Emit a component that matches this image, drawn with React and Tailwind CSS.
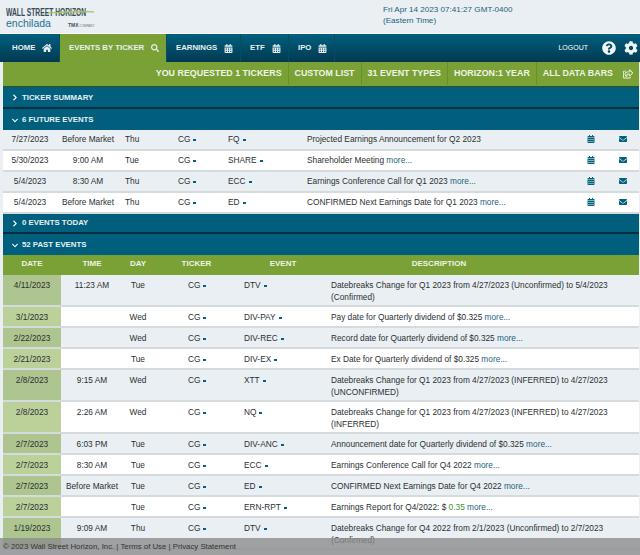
import { FaHome, FaSearch, FaCalendarAlt, FaQuestionCircle, FaCog, FaEnvelope, FaChevronRight, FaChevronDown, FaRegShareSquare } from "react-icons/fa";

const futureEvents = [
  ["7/27/2023", "Before Market", "Thu", "FQ", "Projected Earnings Announcement for Q2 2023", ""],
  ["5/30/2023", "9:00 AM", "Tue", "SHARE", "Shareholder Meeting ", "more..."],
  ["5/4/2023", "8:30 AM", "Thu", "ECC", "Earnings Conference Call for Q1 2023 ", "more..."],
  ["5/4/2023", "Before Market", "Thu", "ED", "CONFIRMED Next Earnings Date for Q1 2023 ", "more..."],
];

const pastEvents = [
  ["4/11/2023", "11:23 AM", "Tue", "DTV", "Datebreaks Change for Q1 2023 from 4/27/2023 (Unconfirmed) to 5/4/2023 (Confirmed)", "", "h-[32px]"],
  ["3/1/2023", "", "Wed", "DIV-PAY", "Pay date for Quarterly dividend of $0.325 ", "more...", "h-[21px]"],
  ["2/22/2023", "", "Wed", "DIV-REC", "Record date for Quarterly dividend of $0.325 ", "more...", "h-[21px]"],
  ["2/21/2023", "", "Tue", "DIV-EX", "Ex Date for Quarterly dividend of $0.325 ", "more...", "h-[21px]"],
  ["2/8/2023", "9:15 AM", "Wed", "XTT", "Datebreaks Change for Q1 2023 from 4/27/2023 (INFERRED) to 4/27/2023 (UNCONFIRMED)", "", "h-[32px]"],
  ["2/8/2023", "2:26 AM", "Wed", "NQ", "Datebreaks Change for Q1 2023 from 4/27/2023 (INFERRED) to 4/27/2023 (INFERRED)", "", "h-[32px]"],
  ["2/7/2023", "6:03 PM", "Tue", "DIV-ANC", "Announcement date for Quarterly dividend of $0.325 ", "more...", "h-[21px]"],
  ["2/7/2023", "8:30 AM", "Tue", "ECC", "Earnings Conference Call for Q4 2022 ", "more...", "h-[21px]"],
  ["2/7/2023", "Before Market", "Tue", "ED", "CONFIRMED Next Earnings Date for Q4 2022 ", "more...", "h-[21px]"],
  ["2/7/2023", "", "Tue", "ERN-RPT", "Earnings Report for Q4/2022: $ ", "more...", "h-[21px]"],
  ["1/19/2023", "9:09 AM", "Thu", "DTV", "Datebreaks Change for Q4 2022 from 2/1/2023 (Unconfirmed) to 2/7/2023 (Confirmed)", "", "h-[32px]"],
];

function Caret() {
  return <span className="ml-[3px] inline-block h-[2px] w-[3px] align-middle bg-[#00607e]" />;
}

function NavTab({ label, icon, width, active }) {
  return (
    <div className={`flex items-center gap-[7px] border-r border-[#0a4a63] pl-[9px] ${width} ${active ? "bg-[#7aa135]" : ""}`}>
      <span className="text-[7.8px] font-bold text-[#e9eff2]">{label}</span>
      {icon}
    </div>
  );
}

function SectionBar({ label, open, className }) {
  return (
    <div className={`flex items-center gap-[4px] bg-[#005f7c] pl-[9px] text-[7.8px] font-bold text-[#e9eff2] ${className}`}>
      {open ? <FaChevronDown className="w-[6px] text-[7px] text-white" /> : <FaChevronRight className="w-[6px] text-[7px] text-white" />}
      <span>{label}</span>
    </div>
  );
}

function SubItem({ children, last }) {
  return (
    <div className={`flex items-center px-[6px] ${last ? "" : "border-r border-[#6a8f2c]"}`}>{children}</div>
  );
}

export default function App() {
  return (
    <div className="relative h-[555px] w-[640px] overflow-hidden bg-[#e9eff2] font-['Liberation_Sans',Arial,sans-serif] text-[#2b2f33]">
      <header className="flex h-[34px] border-b border-white">
        <div className="relative w-[127px] pl-[6px] pt-[7px] leading-none">
          <div className="origin-left scale-x-[0.64] text-[10.5px] font-bold whitespace-nowrap text-[#3a4a55]">WALL STREET HORIZON</div>
          <div className="flex items-end text-[10.5px] text-[#1d7191]">
            enchilada
            <span className="ml-[17px] text-[5px] font-bold text-[#46525a]">TMX</span>
            <span className="ml-[1px] text-[3px] text-[#6b7680]">COMPANY</span>
          </div>
          <svg className="absolute left-[48px] top-[9px]" width="48" height="6" viewBox="0 0 48 6" fill="none">
            <path d="M0 4 C14 3 30 1 46 3 C30 2.5 16 4 0 4Z" fill="#a6c46a" stroke="#a6c46a" strokeWidth="0.8" />
          </svg>
        </div>
        <div className="ml-[256px] pt-[4px] text-[8.1px] leading-[11px] text-[#1d5f7c]">
          <div>Fri Apr 14 2023 07:41:27 GMT-0400</div>
          <div>(Eastern Time)</div>
        </div>
      </header>

      <nav className="flex h-[28px] bg-gradient-to-b from-[#00607e] to-[#023a52] pl-[3px]">
        <NavTab label="HOME" width="w-[57px]" icon={<FaHome className="text-[10px] text-[#e9eff2]" />} />
        <NavTab label="EVENTS BY TICKER" width="w-[107px]" active icon={<FaSearch className="text-[8px] text-[#e9eff2]" />} />
        <NavTab label="EARNINGS" width="w-[74px]" icon={<FaCalendarAlt className="text-[9px] text-[#e9eff2]" />} />
        <NavTab label="ETF" width="w-[48px]" icon={<FaCalendarAlt className="text-[9px] text-[#e9eff2]" />} />
        <NavTab label="IPO" width="w-[46px]" icon={<FaCalendarAlt className="text-[9px] text-[#e9eff2]" />} />
        <div className="ml-auto flex items-center pr-[2px]">
          <span className="mr-[14px] text-[7px] text-white">LOGOUT</span>
          <FaQuestionCircle className="mr-[8px] text-[14px] text-[#f3f6f7]" />
          <FaCog className="text-[14px] text-[#f3f6f7]" />
        </div>
      </nav>

      <main className="pl-[3px] pr-[1px]">
        <div className="flex h-[25px] justify-end border-b border-[#33501a] bg-[#7aa135] pb-[1px] text-[8.9px] font-bold text-[#f0f4e6]">
          <SubItem>YOU REQUESTED 1 TICKERS</SubItem>
          <SubItem>CUSTOM LIST</SubItem>
          <SubItem>31 EVENT TYPES</SubItem>
          <SubItem>HORIZON:1 YEAR</SubItem>
          <SubItem last>ALL DATA BARS<FaRegShareSquare className="ml-[10px] text-[10px]" /></SubItem>
        </div>

        <SectionBar label="TICKER SUMMARY" className="h-[22px] border-b-2 border-[#0b2f3f] pt-[1px]" />
        <SectionBar label="6 FUTURE EVENTS" open className="h-[21px] pt-[1px]" />

        {futureEvents.map((e, i) => (
          <div key={i} className={`flex h-[21px] items-center border-b-2 border-[#d5dadd] text-[8.3px] ${i % 2 ? "bg-white" : "bg-[#e9eff2]"}`}>
            <div className="w-[54px] text-center">{e[0]}</div>
            <div className="w-[62px] text-center">{e[1]}</div>
            <div className="w-[51px] pl-[6px]">{e[2]}</div>
            <div className="w-[52px] pl-[8px]">CG<Caret /></div>
            <div className="w-[85px] pl-[6px]">{e[3]}<Caret /></div>
            <div className="w-[279px]">{e[4]}<span className="text-[#1d5f7c]">{e[5]}</span></div>
            <div className="mb-[2px] w-[33px] pl-[1px]"><FaCalendarAlt className="text-[8px] text-[#00607e]" /></div>
            <div className="mb-[2px]"><FaEnvelope className="text-[8px] text-[#00607e]" /></div>
          </div>
        ))}

        <SectionBar label="0 EVENTS TODAY" className="h-[20px] border-b-2 border-[#0b2f3f]" />
        <SectionBar label="52 PAST EVENTS" open className="h-[21px] pt-[1px]" />

        <div className="flex h-[20px] items-center bg-[#7aa135] pb-[2px] text-[8px] font-bold text-[#eef3e2]">
          <div className="w-[58px] text-center">DATE</div>
          <div className="w-[62px] text-center">TIME</div>
          <div className="w-[30px] text-center">DAY</div>
          <div className="w-[87px] text-center">TICKER</div>
          <div className="w-[86px] text-center">EVENT</div>
          <div className="w-[226px] text-center">DESCRIPTION</div>
        </div>

        {pastEvents.map((e, i) => (
          <div key={i} className={`flex border-b-2 border-[#d5dadd] text-[8.3px] leading-[12px] ${e[6]} ${i % 2 ? "bg-white" : "bg-[#e9eff2]"}`}>
            <div className={`w-[58px] pt-[4px] text-center ${i % 2 ? "bg-[#bcd19a]" : "bg-[#aec58f]"}`}>{e[0]}</div>
            <div className="w-[62px] pt-[4px] text-center whitespace-nowrap">{e[1]}</div>
            <div className="w-[30px] pt-[4px] text-center">{e[2]}</div>
            <div className="w-[87px] pt-[4px] pl-[35px]">CG<Caret /></div>
            <div className="w-[91px] pt-[4px] pl-[4px]">{e[3]}<Caret /></div>
            <div className="w-[280px] pt-[4px]">
              {e[4]}
              {e[3] === "ERN-RPT" && <span className="text-[#3c8f2f]">0.35 </span>}
              <span className="text-[#1d5f7c]">{e[5]}</span>
            </div>
          </div>
        ))}
      </main>

      <footer className="absolute inset-x-0 bottom-0 flex h-[17px] items-center bg-[#8c8c8c]/80 pl-[3px] text-[7.8px] text-[#333]">
        © 2023 Wall Street Horizon, Inc. | Terms of Use | Privacy Statement
      </footer>
    </div>
  );
}
